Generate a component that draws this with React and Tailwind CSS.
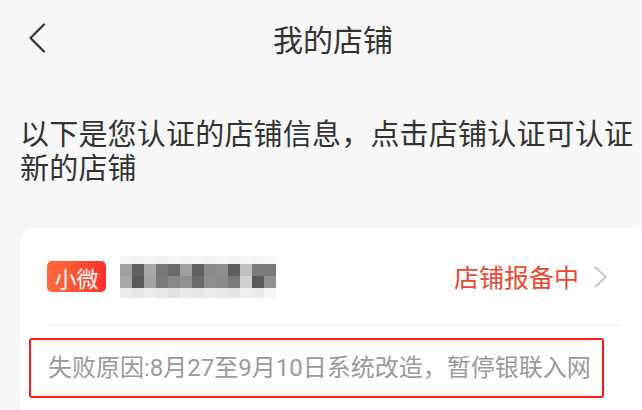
import React from "react";

const mosaicRows = [
  ["bg-[#f4f4f4]","bg-[#f2f2f2]","bg-[#f5f5f5]","bg-[#f1f1f1]","bg-[#f6f6f6]","bg-[#f3f3f3]","bg-[#f5f5f5]","bg-[#f2f2f2]","bg-[#f6f6f6]","bg-[#f3f3f3]","bg-[#f7f7f7]","bg-[#f4f4f4]","bg-[#f9f9f9]"],
  ["bg-[#a0a0a0]","bg-[#606060]","bg-[#a8a8a8]","bg-[#787878]","bg-[#6a6a6a]","bg-[#a0a0a0]","bg-[#606060]","bg-[#8a8a8a]","bg-[#8e8e8e]","bg-[#5e5e5e]","bg-[#c0c0c0]","bg-[#7a7a7a]","bg-[#7a7a7a]"],
  ["bg-[#a8a8a8]","bg-[#5a5a5a]","bg-[#a5a5a5]","bg-[#7a7a7a]","bg-[#888888]","bg-[#909090]","bg-[#6a6a6a]","bg-[#8e8e8e]","bg-[#8a8a8a]","bg-[#7a7a7a]","bg-[#d0d0d0]","bg-[#5a5a5a]","bg-[#909090]"],
  ["bg-[#ececec]","bg-[#e6e6e6]","bg-[#eeeeee]","bg-[#e8e8e8]","bg-[#e2e2e2]","bg-[#eaeaea]","bg-[#e6e6e6]","bg-[#ececec]","bg-[#e9e9e9]","bg-[#e4e4e4]","bg-[#f0f0f0]","bg-[#ebebeb]","bg-[#f6f6f6]"],
];
const rowHeights = ["h-[8px]", "h-[12px]", "h-[12px]", "h-[10px]"];

function Mosaic() {
  return (
    <div className="flex flex-col blur-[0.6px]">
      {mosaicRows.map((row, i) => (
        <div key={i} className={`flex ${rowHeights[i]}`}>
          {row.map((c, j) => (
            <div key={j} className={`w-[12px] ${c}`} />
          ))}
        </div>
      ))}
    </div>
  );
}

export default function App() {
  return (
    <div className="w-[642px] h-[410px] overflow-hidden bg-[#f7f7f7] font-['Noto_Sans_CJK_SC',sans-serif]">
      <div className="w-[666px]">
        {/* Header */}
        <div className="grid grid-cols-[1fr_auto_1fr] items-center h-[76px]">
          <div className="pl-[28px] flex items-center">
            <svg width="18" height="30" viewBox="0 0 18 30" fill="none">
              <path d="M16 1.5 L2.5 15 L16 28.5" stroke="#333333" strokeWidth="2.2" strokeLinecap="round" strokeLinejoin="round" />
            </svg>
          </div>
          <div className="text-[30px] leading-none text-[#333333]">我的店铺</div>
          <div />
        </div>

        {/* Description */}
        <div className="pt-[39px] pl-[20px] w-[640px] text-[29px] leading-[34px] text-[#333333] tracking-[0.2px]">
          以下是您认证的店铺信息，点击店铺认证可认证新的店铺
        </div>

        {/* Card */}
        <div className="mt-[45px] mx-[20px] bg-white rounded-[12px] px-[27px] pt-[33px] pb-[24px]">
          <div className="flex items-center h-[31px]">
            <div className="w-[59px] h-[31px] rounded-[5px] bg-gradient-to-r from-[#ff6b3b] to-[#ff2e2e] flex items-center justify-center text-white text-[22px] leading-none">
              小微
            </div>
            <div className="ml-[14px]">
              <Mosaic />
            </div>
            <div className="flex-1" />
            <div className="text-[25px] leading-none text-[#e9472f]">店铺报备中</div>
            <svg className="ml-[14px] mr-[10px]" width="16" height="22" viewBox="0 0 16 22" fill="none">
              <path d="M2.5 1.5 L13 11 L2.5 20.5" stroke="#c6c6c6" strokeWidth="2" strokeLinecap="round" strokeLinejoin="round" />
            </svg>
          </div>
          <div className="mt-[33px] h-px bg-[#efefef]" />
          <div className="mt-[12px] ml-[-18px] w-[575px] h-[60px] border-2 border-[#ff1a1a] rounded-[3px] flex items-center pl-[17px]">
            <span className="text-[24px] leading-none text-[#9a9a9a] font-['Roboto','Noto_Sans_CJK_SC',sans-serif]">
              失败原因:8月27至9月10日系统改造，暂停银联入网
            </span>
          </div>
        </div>
      </div>
    </div>
  );
}
